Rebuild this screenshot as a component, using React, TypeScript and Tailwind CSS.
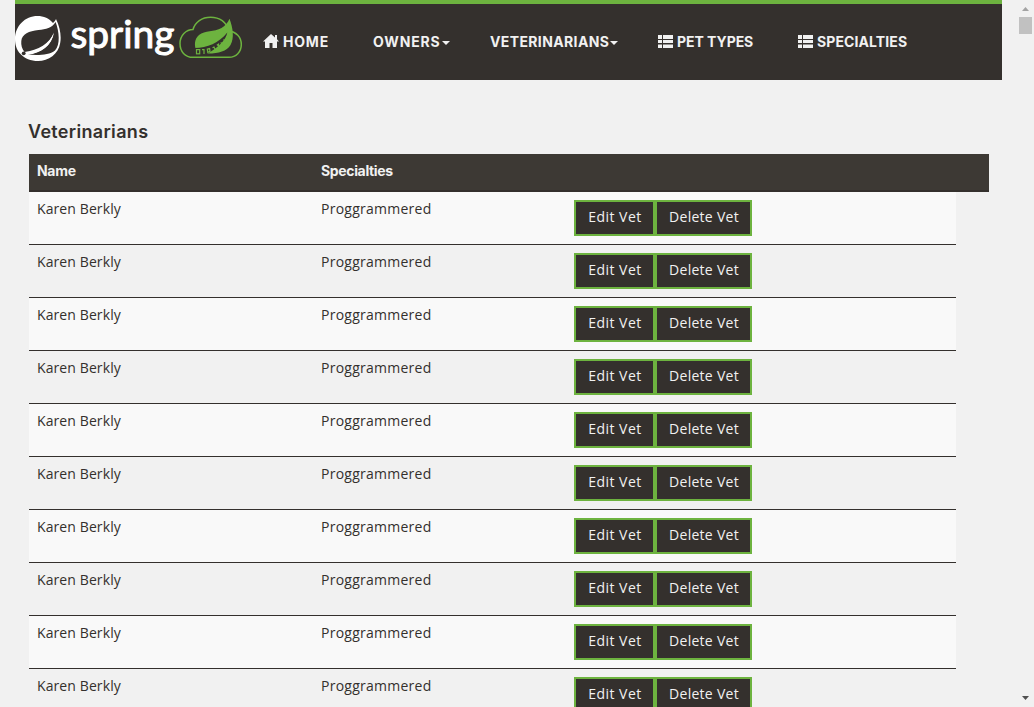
import type { ReactNode } from "react";

const vets = Array.from({ length: 10 }, (_, id) => ({
  id,
  name: "Karen Berkly",
  specialty: "Proggrammered",
}));

function SpringMark() {
  return (
    <svg className="h-[46px] w-[46px] shrink-0" viewBox="0 0 46 46">
      <path
        fill="#fff"
        d="M41 3C45 11 46.500 20 45.200 27C43.500 38 33.500 45 23 45C16 45 9.500 42.500 5.500 38C1.500 34 0 28.500 0 23C0 10 10 0 22.500 0C28.500 0 34.500 2.500 38 7C39.500 5.500 40.400 4.500 41 3Z"
      />
      <path
        fill="#34302d"
        d="M40.600 6C37 12 31 13.300 23.500 14C14 15 7 18 6.300 25C5.900 29 7 33 9.500 36C22 36 33 30 38.500 17.500C36 30 26 37.500 12.500 38.600C23 39.300 34 39.300 40 34.500C45.500 28.500 44.300 16 40.600 6Z"
      />
      <path d="M39 16.500C34.500 27.500 24 34 8.500 36.300L12 38.700C27 36.500 37 29 39 16.500Z" fill="#fff" />
      <circle cx="8.700" cy="37.300" r="1.900" fill="#34302d" />
    </svg>
  );
}

function CloudLeaf() {
  return (
    <svg className="ml-[4px] h-[46px] w-[64px] shrink-0" viewBox="0 0 64 46">
      <path
        d="M14 41.300C6 41.300 1 35.500 1 27.500C1 19.500 7 13.500 14 13.500C16 6 23 1.200 31.500 1.200C40 1.200 47 5.500 50.500 15C57 16 62.300 21 62.300 28.500C62.300 36 57 41.300 50 41.300Z"
        fill="none"
        stroke="#6db33f"
        strokeWidth="1.500"
      />
      <path
        d="M50.500 2.700C54 12 55.500 22 51.500 29C47.500 35.500 39 37.700 28 37.500L17 34C15.500 30 15 23 20 19C26 14.500 35 16 42.500 12C46 10 49 6.500 50.500 2.700Z"
        fill="#6db33f"
      />
      <path d="M16 32C28 32 40 27 48.300 16.500C47 24 40 31 27 38.500H16Z" fill="#34302d" />
      <g fill="none" stroke="#6db33f" strokeWidth="1.200">
        <rect x="17.500" y="33.600" width="3.200" height="4.200" />
        <path d="M23 33.700H25V38M28.300 33.200L30.600 32.600L31 35.300L28.800 36.300ZM33.500 31.700L35 31L36 33.300M37.800 29.300L39.500 28.200L39.500 31M41.800 26.300L43.200 28.300M44.500 23.500L45.700 25" />
      </g>
    </svg>
  );
}

function Logo() {
  return (
    <div className="flex h-[46px] w-[227px] shrink-0">
      <SpringMark />
      <svg className="-mt-[12px] ml-[7px] h-[66px] w-[107px] shrink-0 overflow-visible" viewBox="0 0 107 66">
        <text
          x="2.500"
          y="44"
          fontSize="38.500"
          textLength="104"
          lengthAdjust="spacingAndGlyphs"
          fill="#fff"
          stroke="#fff"
          strokeWidth="1"
          strokeLinejoin="round"
          className="font-['Lato',sans-serif] font-normal"
        >
          spring
        </text>
      </svg>
      <CloudLeaf />
    </div>
  );
}

function HomeIcon() {
  return (
    <svg className="-ml-px mr-[4px] h-[14px] w-[16px]" viewBox="0 0 16 14" fill="#f1f1f1">
      <path d="M8 0L12 3.500V1H14V5.300L16 7.500H14V14H9.500V9H6.500V14H2V7.500H0Z" />
    </svg>
  );
}

function ListIcon() {
  return (
    <svg className="mr-[4px] h-[13px] w-[15px]" viewBox="0 0 15 13" fill="#f1f1f1">
      <path d="M0 0H4V4H0ZM5 0H15V4H5ZM0 5H4V8H0ZM5 5H15V8H5ZM0 9.500H4V13H0ZM5 9.500H15V13H5Z" />
    </svg>
  );
}

function Caret() {
  return (
    <svg className="ml-[1px] mt-[3px] h-[4px] w-[8px]" viewBox="0 0 8 4" fill="#f1f1f1">
      <path d="M0 0H8L4 4Z" />
    </svg>
  );
}

function NavItem({ className, children }: { className: string; children: ReactNode }) {
  return (
    <a href="#" className={`flex h-[20px] shrink-0 items-center ${className}`}>
      {children}
    </a>
  );
}

function VetButton({ className, children }: { className: string; children: ReactNode }) {
  return (
    <button
      className={`flex h-[36px] items-center justify-center whitespace-nowrap border-2 border-[#6db33f] bg-[#34302d] pb-[3px] pl-[1px] text-[14px] leading-[19px] text-[#f1f1f1] ${className}`}
    >
      {children}
    </button>
  );
}

function ScrollBar() {
  return (
    <div className="flex h-full w-[17px] shrink-0 flex-col items-center bg-[#f1f1f1] pb-[7px] pt-[7px]">
      <svg className="h-[4px] w-[7px]" viewBox="0 0 7 4" fill="#a3a3a3">
        <path d="M3.500 0L7 4H0Z" />
      </svg>
      <div className="mt-[6px] h-[17px] w-[13px] bg-[#c1c1c1]" />
      <svg className="mt-auto h-[4px] w-[7px]" viewBox="0 0 7 4" fill="#505050">
        <path d="M0 0H7L3.500 4Z" />
      </svg>
    </div>
  );
}

export default function App() {
  return (
    <div className="flex h-[707px] w-[1034px] overflow-hidden bg-[#f1f1f1] font-['Open_Sans',sans-serif] text-[14px] text-[#34302d]">
      <div className="flex min-w-0 flex-1 flex-col pl-[15px]">
        <header className="flex h-[80px] w-[987px] shrink-0 border-t-4 border-[#6db33f] bg-[#34302d] pt-[12px]">
          <Logo />
          <nav className="ml-[22px] mt-[15px] flex whitespace-nowrap font-['Inter',sans-serif] text-[14px] font-bold text-[#f1f1f1]">
            <NavItem className="w-[109px] tracking-[0.8px]">
              <HomeIcon />
              HOME
            </NavItem>
            <NavItem className="w-[117px] tracking-[0.85px]">
              OWNERS
              <Caret />
            </NavItem>
            <NavItem className="w-[168px] tracking-[0.37px]">
              VETERINARIANS
              <Caret />
            </NavItem>
            <NavItem className="w-[140px] tracking-[-0.05px]">
              <ListIcon />
              PET TYPES
            </NavItem>
            <NavItem className="tracking-[0.1px]">
              <ListIcon />
              SPECIALTIES
            </NavItem>
          </nav>
        </header>
        <main className="flex flex-col pl-[14px] pt-[40px]">
          <h2 className="-ml-px h-[34px] whitespace-nowrap font-['Inter',sans-serif] text-[18px] font-semibold leading-[23px] tracking-[0.32px]">
            Veterinarians
          </h2>
          <div className="flex h-[38px] w-[960px] shrink-0 border-b-2 border-[#34302d] bg-[#3d3934] pt-[7px] font-['Inter',sans-serif] text-[14px] font-bold leading-[20px] text-[#f1f1f1]">
            <div className="w-[284px] pl-[8px] tracking-[-0.3px]">Name</div>
            <div className="pl-[8px] tracking-[-0.35px]">Specialties</div>
          </div>
          <div className="flex flex-col">
            {vets.map((vet) => (
              <div
                key={vet.id}
                className="flex h-[53px] w-[927px] shrink-0 border-b border-[#34302d] pt-[8px] odd:bg-[#f9f9f9] even:bg-[#f1f1f1]"
              >
                <div className="w-[284px] pl-[8px] leading-[18px] tracking-[0.1px]">{vet.name}</div>
                <div className="w-[261px] pl-[8px] leading-[18px] tracking-[0.25px]">{vet.specialty}</div>
                <div className="flex">
                  <VetButton className="w-[81px] tracking-[0.45px]">Edit Vet</VetButton>
                  <VetButton className="w-[97px] tracking-[0.28px]">Delete Vet</VetButton>
                </div>
              </div>
            ))}
          </div>
        </main>
      </div>
      <ScrollBar />
    </div>
  );
}
